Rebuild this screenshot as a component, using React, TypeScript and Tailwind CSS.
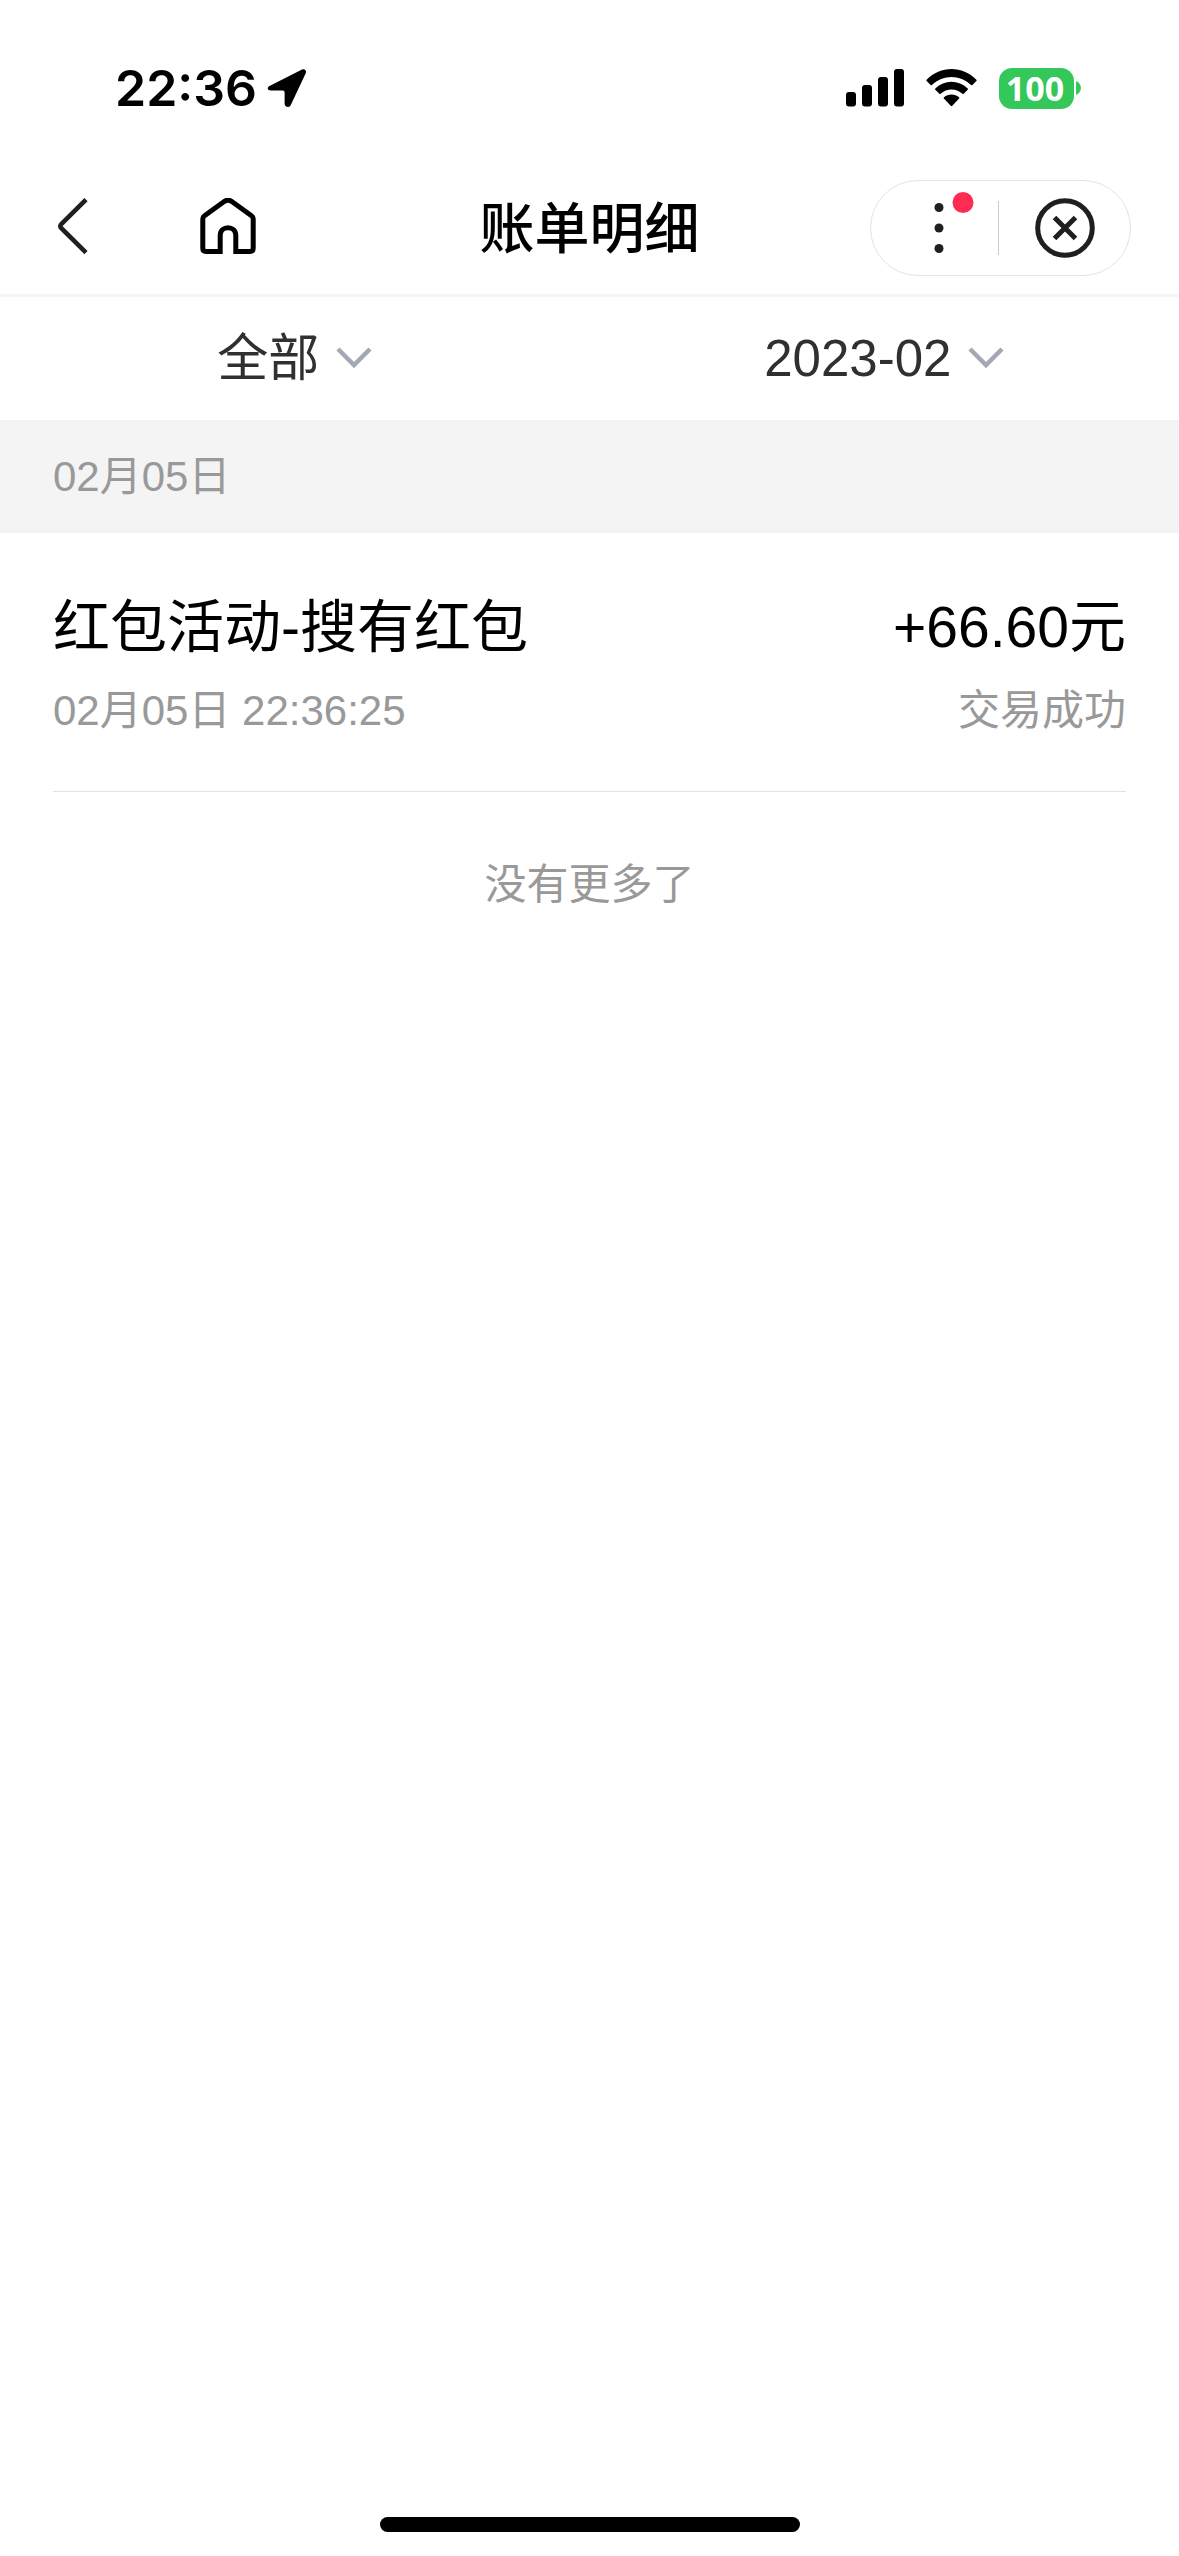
import { ReactNode } from "react";

interface Bill {
  id: number;
  title: string;
  amount: string;
  time: string;
  status: string;
}

interface BillGroup {
  date: string;
  bills: Bill[];
}

const groups: BillGroup[] = [
  {
    date: "02月05日",
    bills: [
      {
        id: 1,
        title: "红包活动-搜有红包",
        amount: "+66.60元",
        time: "02月05日 22:36:25",
        status: "交易成功",
      },
    ],
  },
];

function StatusBar() {
  return (
    <div className="flex h-[162px] items-center justify-between pt-[14px] pr-[98px] pl-[115px]">
      <div className="flex items-center gap-2.5">
        <span className="font-['Inter'] text-[50px] leading-[60px] font-semibold">22:36</span>
        <svg width="40" height="40" viewBox="0 0 40 40">
          <path
            d="M3 17.8 34.5 1.7C37.6.2 40 2.500 38.600 5.600L23.800 37C22.300 40.200 17.600 39.500 17.600 35.600V24.200Q17.600 22.400 15.800 22.400H4.200C.2 22.400-.4 19.500 3 17.800Z"
            fill="#000"
          />
        </svg>
      </div>

      <div className="flex items-center gap-[22px]">
        <svg width="58" height="38" viewBox="0 0 58 38">
          <rect x="0" y="23" width="10" height="14.500" rx="3" />
          <rect x="16" y="16" width="10" height="21.500" rx="3" />
          <rect x="32" y="8" width="10" height="29.500" rx="3" />
          <rect x="48" y="0" width="10" height="37.500" rx="3" />
        </svg>
        <svg width="51" height="38" viewBox="0 0 51 38">
          <path d="M.6 10.800C14.500-3.600 36.500-3.600 50.400 10.800 50.700 11.200 50.700 11.700 50.400 12L46.400 16C46 16.400 45.500 16.400 45.100 16 34 5.300 17 5.300 5.900 16 5.500 16.400 5 16.400 4.600 16L.6 12C.3 11.700.3 11.200.6 10.800Z" />
          <path d="M9.300 19.400C18.400 10.500 32.600 10.500 41.700 19.400 42.100 19.800 42.100 20.300 41.700 20.700L37.700 24.700C37.300 25.100 36.800 25.100 36.400 24.700 30.200 19 20.800 19 14.600 24.700 14.200 25.100 13.700 25.100 13.300 24.700L9.300 20.700C8.900 20.300 8.900 19.800 9.300 19.400Z" />
          <path d="M18 28.300C22.300 24.700 28.700 24.700 33 28.300 33.500 28.700 33.500 29.200 33.100 29.600L26.300 36.800C25.800 37.300 25.200 37.300 24.700 36.800L17.900 29.600C17.500 29.200 17.500 28.700 18 28.300Z" />
        </svg>
        <div className="flex items-center gap-0.5">
          <span className="flex h-[41px] w-[75px] items-center justify-center rounded-[13px] bg-[#34c759] pr-[3px] font-['Open_Sans'] text-[34px] leading-none font-bold text-white">
            100
          </span>
          <svg width="5" height="14" viewBox="0 0 5 14">
            <path d="M0 0C6.500 2.500 6.500 11.500 0 14Z" fill="#34c759" />
          </svg>
        </div>
      </div>
    </div>
  );
}

function NavBar() {
  return (
    <header className="grid h-[135px] grid-cols-[1fr_auto_1fr] items-center border-b-[3px] border-[#f5f5f5] px-12">
      <div className="flex items-center gap-[112px]">
        <button type="button" aria-label="返回">
          <svg width="40" height="60" viewBox="-9 0 40 60" fill="none" stroke="#1f1f1f" strokeWidth="4.600">
            <path d="M29 1.700 4.300 26.200Q2.300 28.200 4.300 30.200L29 54.700" />
          </svg>
        </button>
        <button type="button" aria-label="首页">
          <svg width="56" height="60" viewBox="0 0 56 60" fill="none" stroke="#000" strokeWidth="5">
            <path d="M20.200 53.500V37.500C20.200 27 35.800 27 35.800 37.500V53.500H50Q53.200 53.500 53.200 50.300V21Q53.200 19 51.500 17.800L31.500 3.300Q28 1 24.500 3.300L4.500 17.800Q2.800 19 2.800 21V50.300Q2.800 53.500 6 53.500H22.700" />
          </svg>
        </button>
      </div>

      <h1 className="pt-0.5 text-[55px] leading-[80px] font-medium">账单明细</h1>

      <div className="flex h-24 w-[261px] items-center justify-self-end rounded-full border border-[#e3e3e3]">
        <button type="button" aria-label="更多" className="flex w-[127px] justify-center">
          <svg width="60" height="72" viewBox="0 0 60 72" className="overflow-visible">
            <g fill="#1f1f1f">
              <circle cx="34" cy="15.500" r="4.500" />
              <circle cx="34" cy="36" r="4.500" />
              <circle cx="34" cy="56.500" r="4.500" />
            </g>
            <circle cx="58" cy="10.500" r="10.500" fill="#ff2b50" />
          </svg>
        </button>
        <span className="h-[54px] w-px bg-[#cccccc]" />
        <button type="button" aria-label="关闭" className="flex flex-1 justify-center">
          <svg width="60" height="60" viewBox="0 0 60 60" fill="none" stroke="#1f1f1f" strokeWidth="5">
            <circle cx="30" cy="30" r="27.300" />
            <path d="m19.500 19.500 21 21m0-21-21 21" />
          </svg>
        </button>
      </div>
    </header>
  );
}

interface FilterProps {
  label: string;
  children: ReactNode;
}

function Filter({ label, children }: FilterProps) {
  return (
    <label className="flex items-center justify-center gap-4">
      <select
        aria-label={label}
        className="appearance-none bg-transparent text-[51px] leading-[75px] text-[#303030]"
      >
        {children}
      </select>
      <svg width="36" height="24" viewBox="0 0 36 24" fill="none" stroke="#a3a8b5" strokeWidth="4.500">
        <path d="m2 2 16 16 16-16" />
      </svg>
    </label>
  );
}

function BillItem({ bill }: { bill: Bill }) {
  return (
    <li className="mx-[53px] flex flex-col gap-3.5 border-b border-[#e3e3e3] pt-[54px] pb-[50px]">
      <div className="flex justify-between text-[57px] leading-[80px] text-black">
        <span>{bill.title}</span>
        <span>{bill.amount}</span>
      </div>
      <div className="flex justify-between text-[42px] leading-[60px] text-[#999999]">
        <span>{bill.time}</span>
        <span>{bill.status}</span>
      </div>
    </li>
  );
}

export default function App() {
  return (
    <div className="flex min-h-screen flex-col bg-white font-['Liberation_Sans','Noto_Sans_CJK_SC',sans-serif] text-black">
      <StatusBar />
      <NavBar />

      <div className="grid h-[123px] grid-cols-2 items-center">
        <Filter label="类型">
          <option>全部</option>
        </Filter>
        <Filter label="月份">
          <option>2023-02</option>
        </Filter>
      </div>

      <main>
        {groups.map((group) => (
          <section key={group.date}>
            <h2 className="bg-[#f4f4f4] px-[53px] pt-[27px] pb-[26px] text-[42px] leading-[60px] text-[#999999]">
              {group.date}
            </h2>
            <ul>
              {group.bills.map((bill) => (
                <BillItem key={bill.id} bill={bill} />
              ))}
            </ul>
          </section>
        ))}
        <p className="pt-[63px] text-center text-[42px] leading-[60px] text-[#999999]">没有更多了</p>
      </main>

      <div className="mx-auto mt-auto mb-6 h-[15px] w-[420px] rounded-full bg-black" />
    </div>
  );
}
